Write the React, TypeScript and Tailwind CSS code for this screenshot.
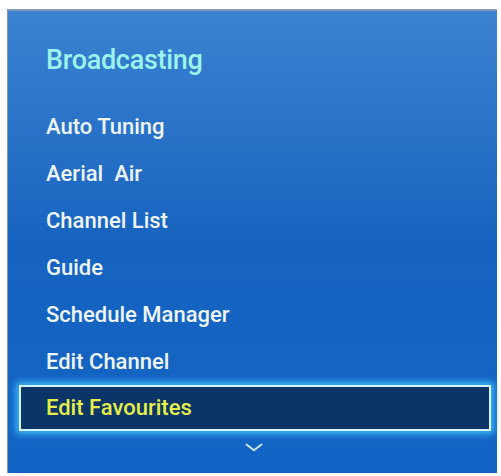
import React from "react";

const items = [
  "Auto Tuning",
  "Aerial  Air",
  "Channel List",
  "Guide",
  "Schedule Manager",
  "Edit Channel",
];

export default function App() {
  return (
    <div className="w-[501px] h-[476px] bg-white overflow-hidden" style={{ fontFamily: 'Roboto, "Liberation Sans", Arial, sans-serif' }}>
      <div className="ml-[7px] mt-[9px] w-[490px] h-[464px] border-t-2 border-l border-[#7f98b8] bg-gradient-to-b from-[#3b82d0] via-[#1663bf] to-[#1264c4] flex flex-col font-medium">
        <div className="pl-[38px] pt-[34px] h-[92px] text-[27px] leading-[31px] text-[#9cf3ee] tracking-[-0.3px]">
          Broadcasting
        </div>
        <div className="flex flex-col">
          {items.map((t) => (
            <div key={t} className="pl-[38px] h-[47px] leading-[47px] text-[22px] text-[#eef6ff] whitespace-pre">
              {t}
            </div>
          ))}
        </div>
        <div className="ml-[11px] mr-[6px] h-[46px] border-2 border-[#d6f6ff] bg-[#0b3566] shadow-[0_0_7px_3px_rgba(70,200,255,0.85)] pl-[25px] leading-[42px] text-[22px] text-[#e6ee4a]">
          Edit Favourites
        </div>
        <div className="flex justify-center pt-[12px]">
          <svg width="18" height="9" viewBox="0 0 18 9" className="ml-[2px]">
            <path d="M1.5 1.5 L9 7.2 L16.5 1.5" fill="none" stroke="#cfe6ff" strokeWidth="2" strokeLinecap="round" strokeLinejoin="round" />
          </svg>
        </div>
      </div>
    </div>
  );
}
